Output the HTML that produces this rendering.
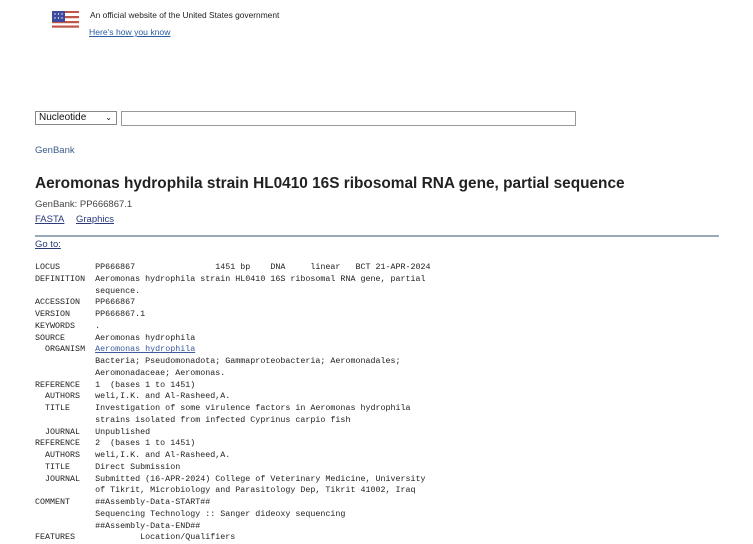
<!DOCTYPE html>
<html><head><meta charset="utf-8"><style>
body{margin:0;width:753px;height:536px;overflow:hidden;background:#fff;font-family:"Liberation Sans",Arial,sans-serif;position:relative}
.a{position:absolute;white-space:nowrap}
pre{position:absolute;left:35px;top:262px;margin:0;font-family:"Liberation Mono",monospace;font-size:8.35px;line-height:11.75px;color:#222}
pre a{color:#3a5a9a;text-decoration:underline}
</style></head><body>
<svg class="a" style="left:52px;top:11px" width="27" height="19" viewBox="0 0 27 19">
<rect width="27" height="19" fill="#fff"/>
<g fill="#c0564a"><rect y="0" width="27" height="2"/><rect y="5" width="27" height="2.2"/><rect y="10" width="27" height="2.2"/><rect y="14.5" width="27" height="2.2"/></g>
<rect width="13" height="11" fill="#3b4a9c"/>
<g fill="#fff"><circle cx="3" cy="3" r=".7"/><circle cx="6.5" cy="3" r=".7"/><circle cx="10" cy="3" r=".7"/><circle cx="3" cy="7" r=".7"/><circle cx="6.5" cy="7" r=".7"/><circle cx="10" cy="7" r=".7"/></g>
</svg>
<div class="a" style="left:90px;top:10px;font-size:8.4px;color:#222">An official website of the United States government</div>
<div class="a" style="left:89px;top:27px;font-size:8.6px;color:#2a5ca0;text-decoration:underline">Here's how you know</div>
<div class="a" style="left:35px;top:111px;width:82px;height:14px;border:1px solid #888;box-sizing:border-box;font-size:10px;line-height:12px;padding-left:3px;color:#111">Nucleotide<span style="position:absolute;right:4px;top:0;font-size:8px">&#8964;</span></div>
<div class="a" style="left:121px;top:111px;width:455px;height:15px;border:1px solid #999;box-sizing:border-box"></div>
<div class="a" style="left:35px;top:145px;font-size:9.5px;color:#3a5a8a">GenBank</div>
<div class="a" style="left:35px;top:175px;font-size:15.4px;font-weight:bold;color:#222">Aeromonas hydrophila strain HL0410 16S ribosomal RNA gene, partial sequence</div>
<div class="a" style="left:35px;top:199px;font-size:9.5px;color:#444">GenBank: PP666867.1</div>
<div class="a" style="left:35px;top:214px;font-size:9.5px;color:#2a3a7a;text-decoration:underline">FASTA</div>
<div class="a" style="left:76px;top:214px;font-size:9.5px;color:#2a3a7a;text-decoration:underline">Graphics</div>
<div class="a" style="left:35px;top:235px;width:684px;height:2px;background:#9aaab8"></div>
<div class="a" style="left:35px;top:239px;font-size:9.5px;color:#2a3a7a;text-decoration:underline">Go to:</div>
<pre>LOCUS       PP666867                1451 bp    DNA     linear   BCT 21-APR-2024
DEFINITION  Aeromonas hydrophila strain HL0410 16S ribosomal RNA gene, partial
            sequence.
ACCESSION   PP666867
VERSION     PP666867.1
KEYWORDS    .
SOURCE      Aeromonas hydrophila
  ORGANISM  <a>Aeromonas hydrophila</a>
            Bacteria; Pseudomonadota; Gammaproteobacteria; Aeromonadales;
            Aeromonadaceae; Aeromonas.
REFERENCE   1  (bases 1 to 1451)
  AUTHORS   weli,I.K. and Al-Rasheed,A.
  TITLE     Investigation of some virulence factors in Aeromonas hydrophila
            strains isolated from infected Cyprinus carpio fish
  JOURNAL   Unpublished
REFERENCE   2  (bases 1 to 1451)
  AUTHORS   weli,I.K. and Al-Rasheed,A.
  TITLE     Direct Submission
  JOURNAL   Submitted (16-APR-2024) College of Veterinary Medicine, University
            of Tikrit, Microbiology and Parasitology Dep, Tikrit 41002, Iraq
COMMENT     ##Assembly-Data-START##
            Sequencing Technology :: Sanger dideoxy sequencing
            ##Assembly-Data-END##
FEATURES             Location/Qualifiers</pre>
</body></html>
